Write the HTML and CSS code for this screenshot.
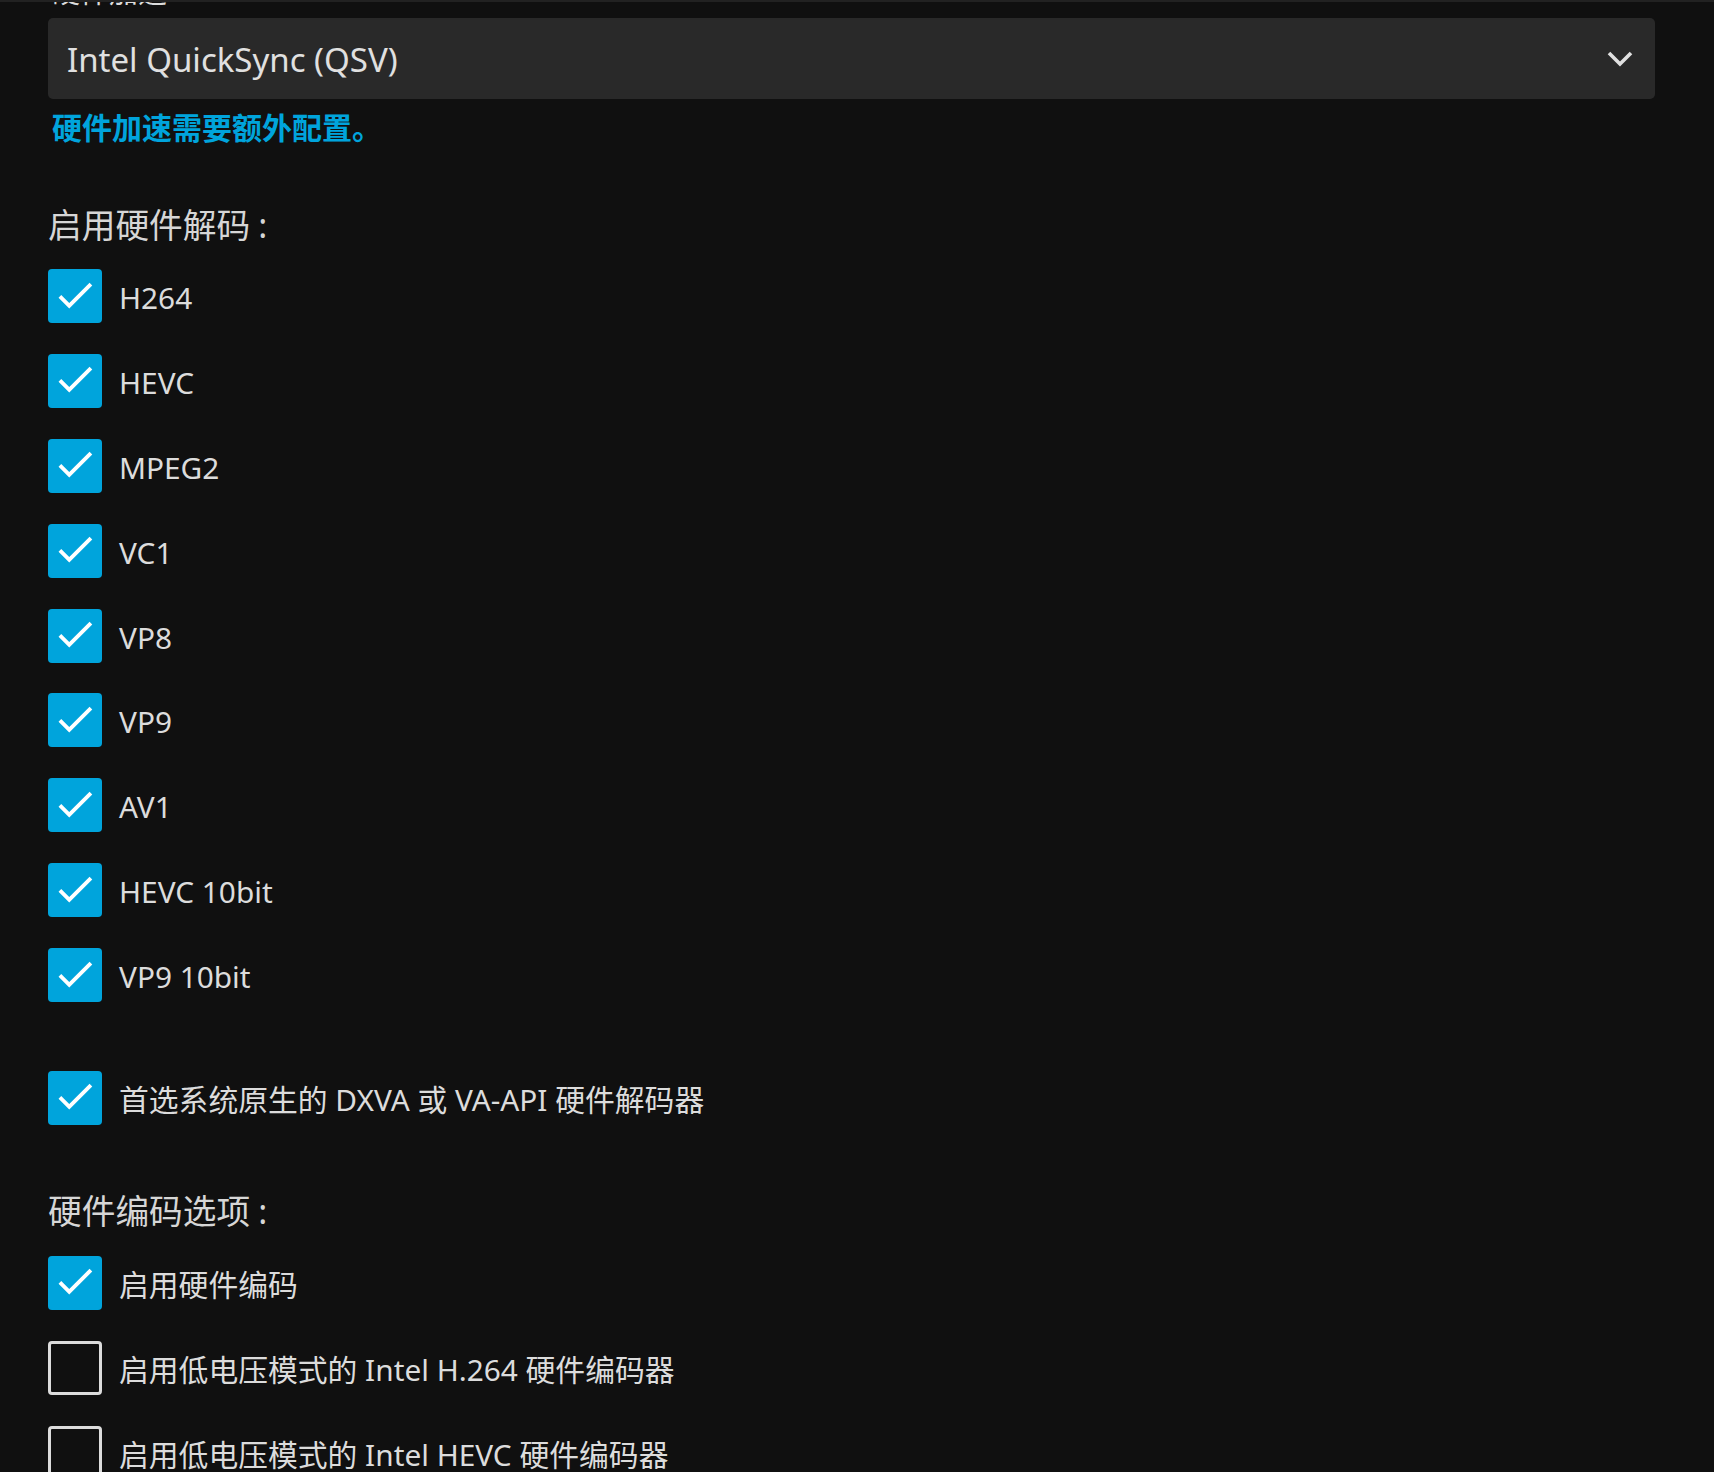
FILE: index.html
```html
<!DOCTYPE html>
<html lang="zh-CN">
<head>
<meta charset="utf-8">
<title>硬件加速</title>
<link rel="stylesheet" href="styles.css">
</head>
<body>
<div class="topbar"></div>
<main class="page">
  <div class="field-label">硬件加速</div>
  <div class="select">
    <span class="select-value">Intel QuickSync (QSV)</span>
    <svg class="chevron" viewBox="0 0 26 16" width="26" height="16"><polyline points="2,2 13,13 24,2" fill="none" stroke="#e0e0e0" stroke-width="3.6"/></svg>
  </div>
  <div class="desc">硬件加速需要额外配置。</div>

  <h3 class="heading">启用硬件解码<span class="colon">:</span></h3>
  <div class="check-list">
    <label class="check-row"><span class="box on"><svg viewBox="0 0 24 24"><path d="M9 16.17L4.83 12l-1.42 1.41L9 19 21 7l-1.41-1.41z"/></svg></span><span class="text">H264</span></label>
    <label class="check-row"><span class="box on"><svg viewBox="0 0 24 24"><path d="M9 16.17L4.83 12l-1.42 1.41L9 19 21 7l-1.41-1.41z"/></svg></span><span class="text">HEVC</span></label>
    <label class="check-row"><span class="box on"><svg viewBox="0 0 24 24"><path d="M9 16.17L4.83 12l-1.42 1.41L9 19 21 7l-1.41-1.41z"/></svg></span><span class="text">MPEG2</span></label>
    <label class="check-row"><span class="box on"><svg viewBox="0 0 24 24"><path d="M9 16.17L4.83 12l-1.42 1.41L9 19 21 7l-1.41-1.41z"/></svg></span><span class="text">VC1</span></label>
    <label class="check-row"><span class="box on"><svg viewBox="0 0 24 24"><path d="M9 16.17L4.83 12l-1.42 1.41L9 19 21 7l-1.41-1.41z"/></svg></span><span class="text">VP8</span></label>
    <label class="check-row"><span class="box on"><svg viewBox="0 0 24 24"><path d="M9 16.17L4.83 12l-1.42 1.41L9 19 21 7l-1.41-1.41z"/></svg></span><span class="text">VP9</span></label>
    <label class="check-row"><span class="box on"><svg viewBox="0 0 24 24"><path d="M9 16.17L4.83 12l-1.42 1.41L9 19 21 7l-1.41-1.41z"/></svg></span><span class="text">AV1</span></label>
    <label class="check-row"><span class="box on"><svg viewBox="0 0 24 24"><path d="M9 16.17L4.83 12l-1.42 1.41L9 19 21 7l-1.41-1.41z"/></svg></span><span class="text">HEVC 10bit</span></label>
    <label class="check-row"><span class="box on"><svg viewBox="0 0 24 24"><path d="M9 16.17L4.83 12l-1.42 1.41L9 19 21 7l-1.41-1.41z"/></svg></span><span class="text">VP9 10bit</span></label>
  </div>

  <label class="check-row native"><span class="box on"><svg viewBox="0 0 24 24"><path d="M9 16.17L4.83 12l-1.42 1.41L9 19 21 7l-1.41-1.41z"/></svg></span><span class="text">首选系统原生的 DXVA 或 VA-API 硬件解码器</span></label>

  <h3 class="heading heading-2">硬件编码选项<span class="colon">:</span></h3>
  <div class="check-list list-2">
    <label class="check-row"><span class="box on"><svg viewBox="0 0 24 24"><path d="M9 16.17L4.83 12l-1.42 1.41L9 19 21 7l-1.41-1.41z"/></svg></span><span class="text">启用硬件编码</span></label>
    <label class="check-row"><span class="box"></span><span class="text">启用低电压模式的 Intel H.264 硬件编码器</span></label>
    <label class="check-row"><span class="box"></span><span class="text">启用低电压模式的 Intel HEVC 硬件编码器</span></label>
  </div>
</main>
</body>
</html>
```

FILE: styles.css
```css
html, body {
  margin: 0;
  padding: 0;
  background: #101010;
  overflow: hidden;
}

body {
  font-family: "Noto Sans", "Noto Sans CJK SC", sans-serif;
  color: #dcdcdc;
  font-size: 29.8px;
}

.topbar {
  position: fixed;
  top: 0;
  left: 0;
  right: 0;
  height: 2px;
  background: #222222;
  z-index: 2;
}

.page {
  display: flex;
  flex-direction: column;
  padding: 0 59px 0 48px;
}

.field-label {
  height: 40px;
  line-height: 40px;
  font-size: 29px;
  margin-top: -28px;
  margin-bottom: 6px;
  padding-left: 3px;
}

.select {
  height: 81px;
  background: #292929;
  border-radius: 5px;
  display: flex;
  align-items: center;
  justify-content: space-between;
  padding: 2px 22px 0 19px;
  box-sizing: border-box;
}

.select-value {
  color: #e0e0e0;
  font-size: 33px;
  line-height: 44px;
}

.chevron {
  display: block;
  margin-top: -2px;
}

.desc {
  margin-top: 9px;
  line-height: 40px;
  font-size: 30px;
  color: #00a4dc;
  font-weight: bold;
  padding-left: 4px;
}

.heading {
  margin: 54px 0 0 0;
  font-size: 33.7px;
  font-weight: normal;
  line-height: 46px;
  color: #d6d6d6;
}

.colon {
  padding-left: 8px;
}

.check-list {
  display: flex;
  flex-direction: column;
  gap: 30.9px;
  margin-top: 21px;
}

.list-2 {
  margin-top: 22px;
}

.check-row {
  display: flex;
  align-items: center;
  gap: 17px;
  height: 54px;
}

.native {
  margin-top: 68.7px;
}

.heading-2 {
  margin-top: 63px;
}

.box {
  width: 54px;
  height: 54px;
  box-sizing: border-box;
  border: 3.6px solid #dcdcdc;
  border-radius: 4px;
  flex: none;
  display: flex;
  align-items: center;
  justify-content: center;
}

.box.on {
  background: #00a4dc;
  border: none;
}

.box svg {
  width: 46px;
  height: 46px;
  fill: #ffffff;
  margin-top: -3px;
}

.text {
  line-height: 40px;
  padding-top: 4px;
  white-space: nowrap;
}
```
